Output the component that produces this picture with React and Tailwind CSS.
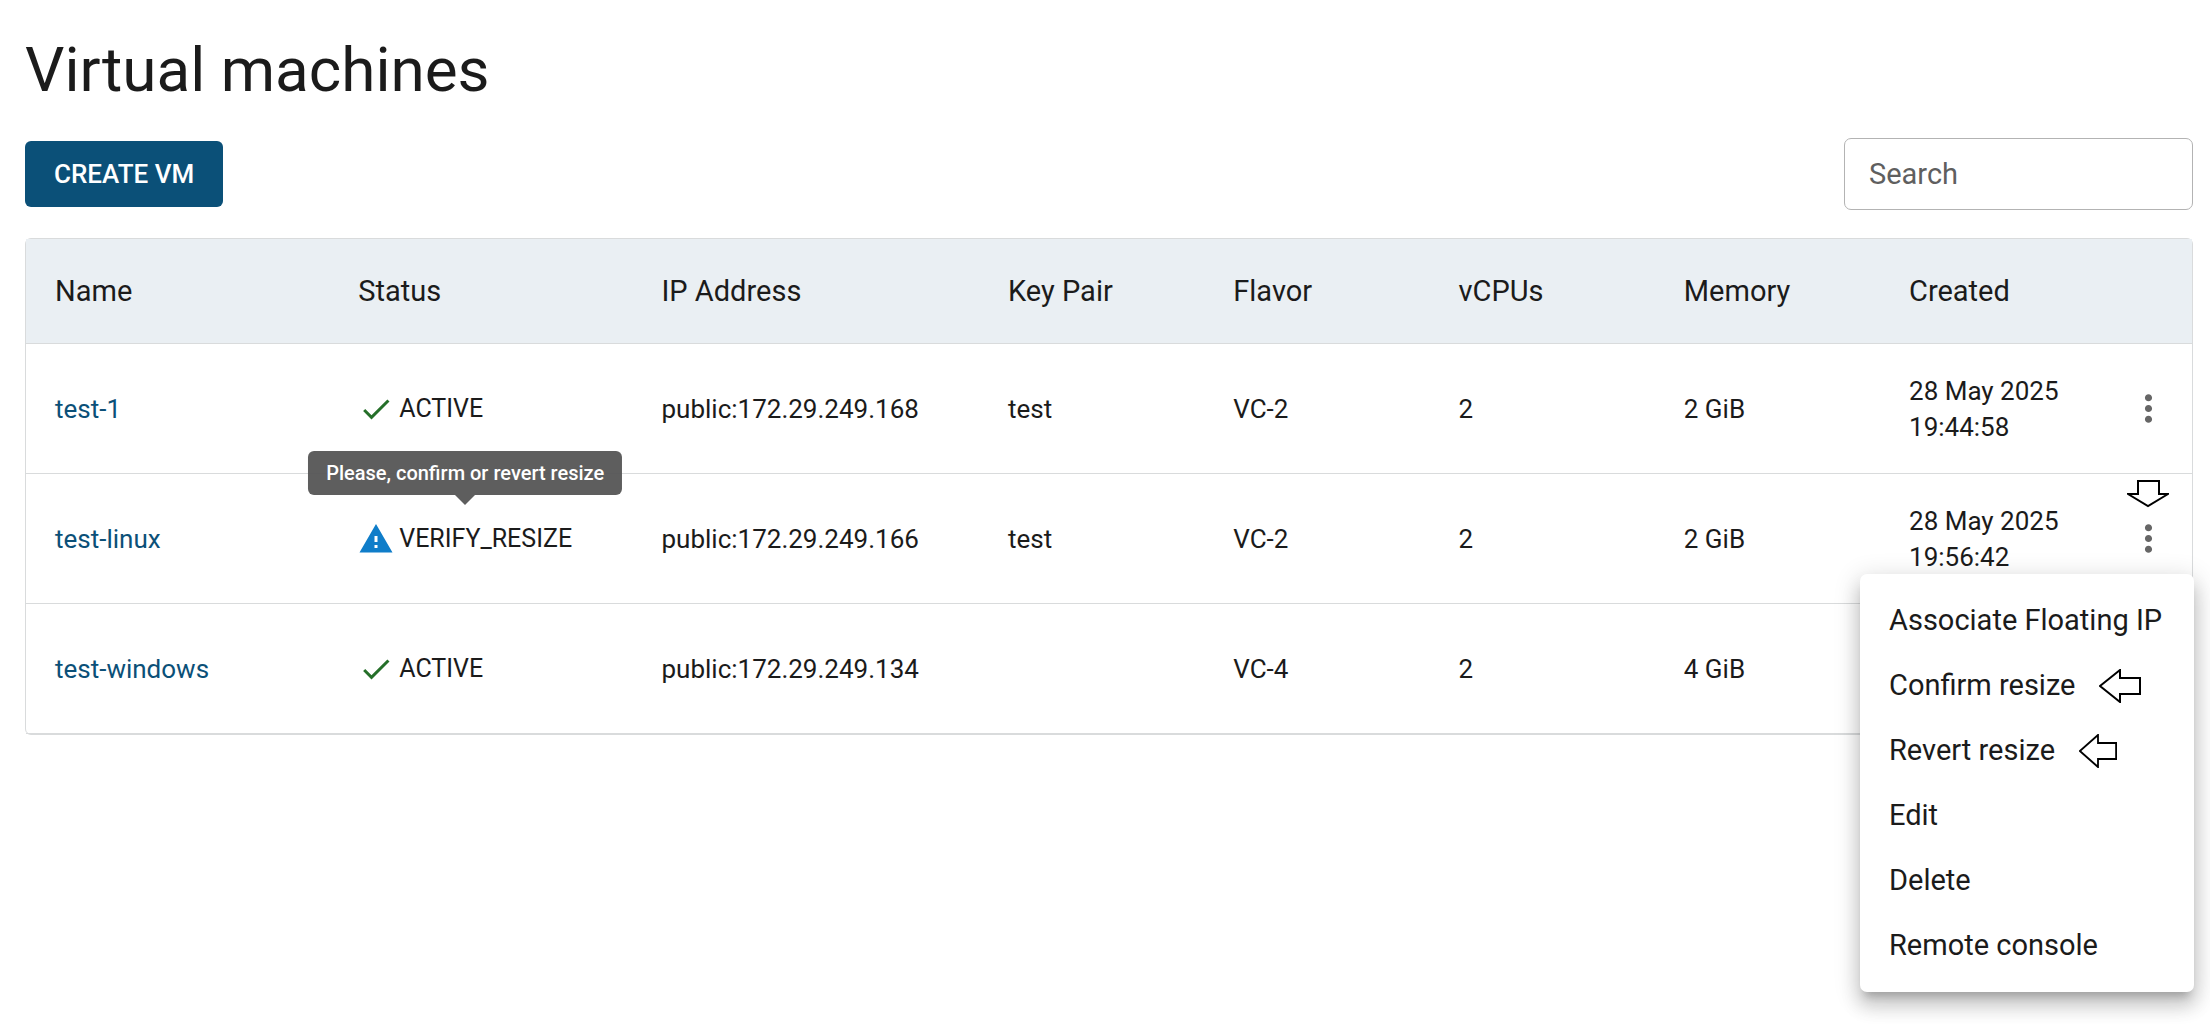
// VirtualMachines page
import React, { useState } from 'react';
import { MdCheck, MdMoreVert, MdWarning } from 'react-icons/md';

const COLUMNS = [
    { label: 'Name', width: 'w-[14%]' },
    { label: 'Status', width: 'w-[14%]' },
    { label: 'IP Address', width: 'w-[16%]' },
    { label: 'Key Pair', width: 'w-[10.4%]' },
    { label: 'Flavor', width: 'w-[10.4%]' },
    { label: 'vCPUs', width: 'w-[10.4%]' },
    { label: 'Memory', width: 'w-[10.4%]' },
    { label: 'Created', width: 'w-[10.4%]' },
];

const VMS = [
    { name: 'test-1', status: 'ACTIVE', ip: 'public:172.29.249.168', keyPair: 'test', flavor: 'VC-2', vcpus: 2, memory: '2 GiB', created: ['28 May 2025', '19:44:58'] },
    { name: 'test-linux', status: 'VERIFY_RESIZE', ip: 'public:172.29.249.166', keyPair: 'test', flavor: 'VC-2', vcpus: 2, memory: '2 GiB', created: ['28 May 2025', '19:56:42'] },
    { name: 'test-windows', status: 'ACTIVE', ip: 'public:172.29.249.134', keyPair: '', flavor: 'VC-4', vcpus: 2, memory: '4 GiB', created: [] },
];

const MENU_ITEMS = [
    { label: 'Associate Floating IP' },
    { label: 'Confirm resize', arrow: 'w-[42px] h-[34px]' },
    { label: 'Revert resize', arrow: 'w-[38px] h-[34px]' },
    { label: 'Edit' },
    { label: 'Delete' },
    { label: 'Remote console' },
];

function ArrowLeft({ className }) {
    return (
        <svg className={className} viewBox="0 0 42 34" preserveAspectRatio="none" fill="white" stroke="black" strokeWidth="2" aria-hidden="true">
            <path d="M1 17 L21 1 V9 H41 V25 H21 V33 Z" />
        </svg>
    );
}

function ArrowDown() {
    return (
        <svg className="absolute top-1.5 left-[22px] w-[42px] h-7" viewBox="0 0 42 28" fill="white" stroke="black" strokeWidth="2" aria-hidden="true">
            <path d="M11 1 H32 V14 H41 L21 26 L1 14 H11 Z" />
        </svg>
    );
}

function Status({ value }) {
    const needsAction = value === 'VERIFY_RESIZE';
    return (
        <div className="relative flex items-center gap-[5px] w-fit text-[25px]">
            {needsAction
                ? <MdWarning className="size-9 text-[#0f7dc9]" />
                : <MdCheck className="size-9 text-[#256f29]" />}
            <span>{value}</span>
            {needsAction && (
                <div role="tooltip" className="absolute bottom-full left-1/2 -translate-x-1/2 mb-[26px] h-11 px-[18px] flex items-center rounded-md bg-[#555555]/95 text-white text-xl font-medium whitespace-nowrap">
                    Please, confirm or revert resize
                    <span className="absolute top-full left-1/2 -translate-x-1/2 border-x-10 border-t-10 border-x-transparent border-t-[#555555]/95" />
                </div>
            )}
        </div>
    );
}

function ActionsMenu() {
    return (
        <div role="menu" className="absolute top-[100px] -right-0.5 z-10 w-[334px] py-3.5 rounded-[7px] bg-white text-[29px] leading-[65px] shadow-[0_9px_9px_-5px_rgba(0,0,0,0.2),0_14px_18px_2px_rgba(0,0,0,0.14),0_5px_25px_4px_rgba(0,0,0,0.12)]">
            {MENU_ITEMS.map(item => (
                <button key={item.label} role="menuitem" className="flex items-center gap-6 w-full px-[29px] text-left whitespace-nowrap">
                    {item.label}
                    {item.arrow && <ArrowLeft className={item.arrow} />}
                </button>
            ))}
        </div>
    );
}

export default function App() {
    const [search, setSearch] = useState('');
    const [openMenu, setOpenMenu] = useState('test-linux');
    const vms = VMS.filter(vm => vm.name.includes(search));

    return (
        <main className="min-h-screen pl-[25px] pr-[17px] pt-8 pb-8 font-[Roboto,sans-serif] text-[#1b1b1b] bg-white">
            <h1 className="text-[62px] leading-[76px]">Virtual machines</h1>

            {/* Toolbar */}
            <div className="flex items-center justify-between mt-[30px]">
                <button className="h-[66px] px-[29px] rounded-md bg-[#0b5078] text-white text-[26px] font-medium">CREATE VM</button>
                <input
                    type="search"
                    aria-label="Search"
                    placeholder="Search"
                    value={search}
                    onChange={e => setSearch(e.target.value)}
                    className="w-[349px] h-[72px] px-6 rounded-[7px] border border-[#b3b3b3] text-[29px] placeholder:text-[#5f5f5f]"
                />
            </div>

            {/* VM list */}
            <div className="mt-7 rounded-md border border-[#d9dbdc]">
                <table className="w-full table-fixed text-left">
                    <thead className="bg-[#eaeff3] text-[29px] leading-[46px]">
                        <tr className="border-b border-[#d9dbdc]">
                            {COLUMNS.map(col => (
                                <th key={col.label} className={`${col.width} px-[29px] py-[29px] font-normal`}>{col.label}</th>
                            ))}
                            <th className="w-[4%]" aria-label="Actions" />
                        </tr>
                    </thead>
                    <tbody className="text-[26px] leading-9">
                        {vms.map(vm => (
                            <tr key={vm.name} className="h-[130px] border-b border-[#d9dbdc]">
                                <td className="px-[29px]"><a href="#" className="text-[#0b5078]">{vm.name}</a></td>
                                <td className="px-[29px]"><Status value={vm.status} /></td>
                                <td className="px-[29px]">{vm.ip}</td>
                                <td className="px-[29px]">{vm.keyPair}</td>
                                <td className="px-[29px]">{vm.flavor}</td>
                                <td className="px-[29px]">{vm.vcpus}</td>
                                <td className="px-[29px]">{vm.memory}</td>
                                <td className="px-[29px] whitespace-nowrap">
                                    {vm.created.map(line => <div key={line}>{line}</div>)}
                                </td>
                                <td className="relative">
                                    <button
                                        aria-label={`Actions for ${vm.name}`}
                                        className="flex mx-auto text-[#666666]"
                                        onClick={() => setOpenMenu(openMenu === vm.name ? null : vm.name)}
                                    >
                                        <MdMoreVert className="size-[43px]" />
                                    </button>
                                    {openMenu === vm.name && <ArrowDown />}
                                    {openMenu === vm.name && <ActionsMenu />}
                                </td>
                            </tr>
                        ))}
                    </tbody>
                </table>
            </div>
        </main>
    );
}
